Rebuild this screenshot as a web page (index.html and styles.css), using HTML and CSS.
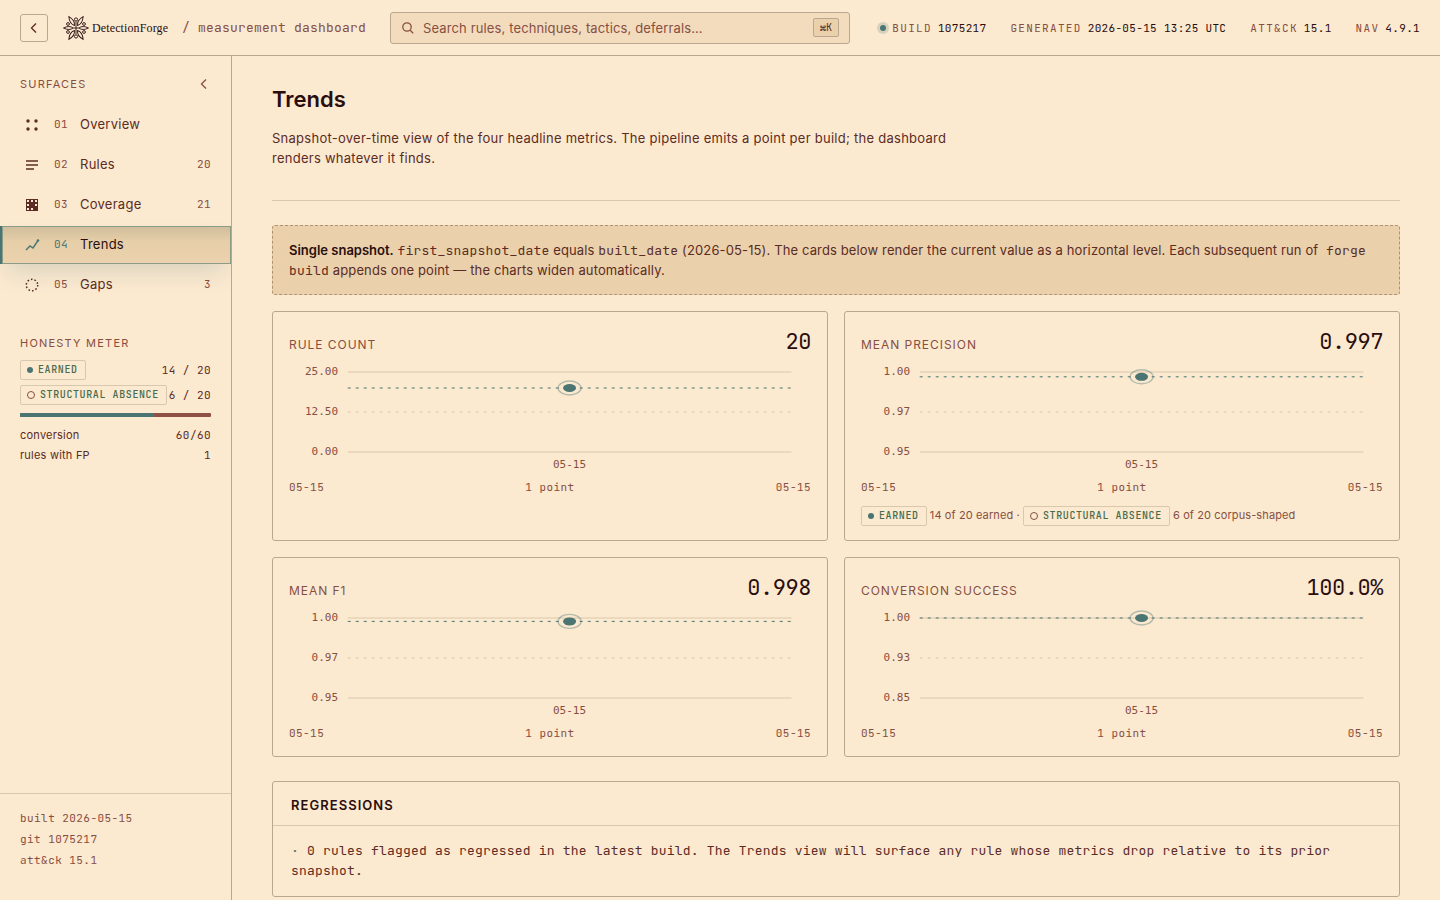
FILE: index.html
```
<!DOCTYPE html>
<html lang="en">

<head>
    <meta charset="UTF-8">
    <meta name="viewport" content="width=device-width, initial-scale=1.0">
    <title>Trends - DetectionForge</title>
    <link rel="stylesheet" href="styles.css">
</head>

<body>
    <header class="topbar">
        <button class="back" type="button" aria-label="Back">
            <svg width="14" height="14" viewBox="0 0 14 14"><path d="M9 2.5 4.5 7 9 11.5"/></svg>
        </button>
        <a class="brand" href="#">
            <svg class="brand-mark" width="26" height="26" viewBox="-13 -13 26 26">
                <defs>
                    <path id="petal" d="M0-3Q-3-6.5 0-12.5Q3-6.5 0-3Z"/>
                    <path id="leaf" d="M0-3Q-3.4-7 0-13.5Q3.4-7 0-3Z"/>
                </defs>
                <use href="#petal" transform="rotate(90)"/>
                <use href="#petal" transform="rotate(270)"/>
                <use href="#leaf" transform="rotate(32)"/>
                <use href="#leaf" transform="rotate(-32)"/>
                <use href="#leaf" transform="rotate(148)"/>
                <use href="#leaf" transform="rotate(212)"/>
                <path d="M0-6.5V6.5M-3 0H3"/>
                <circle cx="0" cy="-8.5" r="1.6"/>
                <circle cx="0" cy="8.5" r="1.6"/>
                <circle cx="8" cy="-4" r="1.4"/>
                <circle cx="8" cy="4" r="1.4"/>
                <circle cx="-8" cy="-4" r="1.4"/>
                <circle cx="-8" cy="4" r="1.4"/>
            </svg>
            <span class="brand-name">DetectionForge</span>
        </a>
        <span class="crumb">/ measurement dashboard</span>
        <label class="search">
            <svg width="14" height="14" viewBox="0 0 14 14"><circle cx="6" cy="6" r="4.2"/><path d="m9.2 9.2 3 3"/></svg>
            <input type="search" aria-label="Search" placeholder="Search rules, techniques, tactics, deferrals…">
            <kbd>⌘K</kbd>
        </label>
        <div class="stats">
            <span class="stat"><i class="pulse"></i><span>BUILD</span><b>1075217</b></span>
            <span class="stat"><span>GENERATED</span><b>2026-05-15 13:25 UTC</b></span>
            <span class="stat"><span>ATT&amp;CK</span><b>15.1</b></span>
            <span class="stat"><span>NAV</span><b>4.9.1</b></span>
        </div>
    </header>

    <div class="layout">
        <aside class="sidebar">
            <div class="side-head">
                <h2 class="side-title">SURFACES</h2>
                <button class="collapse" type="button" aria-label="Collapse sidebar">
                    <svg width="14" height="14" viewBox="0 0 14 14"><path d="M9 2.5 4.5 7 9 11.5"/></svg>
                </button>
            </div>
            <nav class="nav">
                <a href="#overview">
                    <svg width="16" height="16" viewBox="0 0 16 16"><g fill="currentColor"><circle cx="4" cy="4" r="1.7"/><circle cx="12" cy="4" r="1.7"/><circle cx="4" cy="12" r="1.7"/><circle cx="12" cy="12" r="1.7"/></g></svg>
                    <span class="num">01</span><span>Overview</span>
                </a>
                <a href="#rules">
                    <svg width="16" height="16" viewBox="0 0 16 16"><path d="M2 4h12M2 8h12M2 12h8" stroke="currentColor" stroke-width="1.5"/></svg>
                    <span class="num">02</span><span>Rules</span><span class="count">20</span>
                </a>
                <a href="#coverage">
                    <svg width="16" height="16" viewBox="0 0 16 16"><path fill="currentColor" d="M2 2h12v12H2z"/><path class="holes" d="M3 3h2v2H3zM7 3h2v2H7zM11 3h2v2h-2zM3 7h2v2H3zM11 7h2v2h-2zM3 11h2v2H3zM7 11h2v2H7z"/></svg>
                    <span class="num">03</span><span>Coverage</span><span class="count">21</span>
                </a>
                <a class="active" href="#trends" aria-current="page">
                    <svg width="16" height="16" viewBox="0 0 16 16"><path d="m2 13 4-4 3 2 5-7.5" fill="none" stroke="currentColor" stroke-width="1.4"/><circle cx="14" cy="3.5" r="1.3" fill="currentColor"/></svg>
                    <span class="num">04</span><span>Trends</span>
                </a>
                <a href="#gaps">
                    <svg width="16" height="16" viewBox="0 0 16 16"><circle cx="8" cy="8" r="5.7" fill="none" stroke="currentColor" stroke-width="1.5" stroke-dasharray="1.6 1.98"/></svg>
                    <span class="num">05</span><span>Gaps</span><span class="count">3</span>
                </a>
            </nav>

            <section class="honesty">
                <h2 class="side-title">HONESTY METER</h2>
                <div class="meter-row"><span class="badge"><i class="dot"></i>EARNED</span><span class="mono">14 / 20</span></div>
                <div class="meter-row"><span class="badge"><i class="ring"></i>STRUCTURAL ABSENCE</span><span class="mono">6 / 20</span></div>
                <div class="bar"><span style="width: 70%"></span></div>
                <div class="kv"><span>conversion</span><span class="mono">60/60</span></div>
                <div class="kv"><span>rules with FP</span><span class="mono">1</span></div>
            </section>

            <footer class="side-foot">
                <div>built 2026-05-15</div>
                <div>git 1075217</div>
                <div>att&amp;ck 15.1</div>
            </footer>
        </aside>

        <main class="main">
            <div class="page-head">
                <h1>Trends</h1>
                <p>Snapshot-over-time view of the four headline metrics. The pipeline emits a point per build; the dashboard renders whatever it finds.</p>
            </div>

            <div class="notice">
                <strong>Single snapshot.</strong> <code>first_snapshot_date</code> equals <code>built_date</code> (2026-05-15). The cards below render the current value as a horizontal level. Each subsequent run of <code class="cmd">forge build</code> appends one point — the charts widen automatically.
            </div>

            <div class="cards">
                <section class="card">
                    <div class="card-head"><h3>RULE COUNT</h3><span class="value">20</span></div>
                    <svg class="chart" role="img" aria-label="Rule count over time">
                        <g class="grid">
                            <line x1="11.25%" x2="96.25%" y1="8" y2="8"/>
                            <line class="mid" x1="11.25%" x2="96.25%" y1="48" y2="48"/>
                            <line x1="11.25%" x2="96.25%" y1="88" y2="88"/>
                        </g>
                        <g class="y-axis">
                            <text x="9.4%" y="11">25.00</text>
                            <text x="9.4%" y="51">12.50</text>
                            <text x="9.4%" y="91">0.00</text>
                        </g>
                        <text class="x-axis" x="53.75%" y="104">05-15</text>
                        <line class="level" x1="11.25%" x2="96.25%" y1="24" y2="24"/>
                        <ellipse class="halo" cx="53.75%" cy="24" rx="11.5" ry="7"/>
                        <ellipse class="point" cx="53.75%" cy="24" rx="6.5" ry="4"/>
                    </svg>
                    <div class="card-foot"><span>05-15</span><span>1 point</span><span>05-15</span></div>
                </section>

                <section class="card">
                    <div class="card-head"><h3>MEAN PRECISION</h3><span class="value">0.997</span></div>
                    <svg class="chart" role="img" aria-label="Mean precision over time">
                        <g class="grid">
                            <line x1="11.25%" x2="96.25%" y1="8" y2="8"/>
                            <line class="mid" x1="11.25%" x2="96.25%" y1="48" y2="48"/>
                            <line x1="11.25%" x2="96.25%" y1="88" y2="88"/>
                        </g>
                        <g class="y-axis">
                            <text x="9.4%" y="11">1.00</text>
                            <text x="9.4%" y="51">0.97</text>
                            <text x="9.4%" y="91">0.95</text>
                        </g>
                        <text class="x-axis" x="53.75%" y="104">05-15</text>
                        <line class="level" x1="11.25%" x2="96.25%" y1="12.8" y2="12.8"/>
                        <ellipse class="halo" cx="53.75%" cy="12.8" rx="11.5" ry="7"/>
                        <ellipse class="point" cx="53.75%" cy="12.8" rx="6.5" ry="4"/>
                    </svg>
                    <div class="card-foot"><span>05-15</span><span>1 point</span><span>05-15</span></div>
                    <div class="legend">
                        <span class="badge"><i class="dot"></i>EARNED</span> 14 of 20 earned · <span class="badge"><i class="ring"></i>STRUCTURAL ABSENCE</span> 6 of 20 corpus-shaped
                    </div>
                </section>

                <section class="card">
                    <div class="card-head"><h3>MEAN F1</h3><span class="value">0.998</span></div>
                    <svg class="chart" role="img" aria-label="Mean F1 over time">
                        <g class="grid">
                            <line x1="11.25%" x2="96.25%" y1="8" y2="8"/>
                            <line class="mid" x1="11.25%" x2="96.25%" y1="48" y2="48"/>
                            <line x1="11.25%" x2="96.25%" y1="88" y2="88"/>
                        </g>
                        <g class="y-axis">
                            <text x="9.4%" y="11">1.00</text>
                            <text x="9.4%" y="51">0.97</text>
                            <text x="9.4%" y="91">0.95</text>
                        </g>
                        <text class="x-axis" x="53.75%" y="104">05-15</text>
                        <line class="level" x1="11.25%" x2="96.25%" y1="11.4" y2="11.4"/>
                        <ellipse class="halo" cx="53.75%" cy="11.4" rx="11.5" ry="7"/>
                        <ellipse class="point" cx="53.75%" cy="11.4" rx="6.5" ry="4"/>
                    </svg>
                    <div class="card-foot"><span>05-15</span><span>1 point</span><span>05-15</span></div>
                </section>

                <section class="card">
                    <div class="card-head"><h3>CONVERSION SUCCESS</h3><span class="value">100.0%</span></div>
                    <svg class="chart" role="img" aria-label="Conversion success over time">
                        <g class="grid">
                            <line x1="11.25%" x2="96.25%" y1="8" y2="8"/>
                            <line class="mid" x1="11.25%" x2="96.25%" y1="48" y2="48"/>
                            <line x1="11.25%" x2="96.25%" y1="88" y2="88"/>
                        </g>
                        <g class="y-axis">
                            <text x="9.4%" y="11">1.00</text>
                            <text x="9.4%" y="51">0.93</text>
                            <text x="9.4%" y="91">0.85</text>
                        </g>
                        <text class="x-axis" x="53.75%" y="104">05-15</text>
                        <line class="level" x1="11.25%" x2="96.25%" y1="8" y2="8"/>
                        <ellipse class="halo" cx="53.75%" cy="8" rx="11.5" ry="7"/>
                        <ellipse class="point" cx="53.75%" cy="8" rx="6.5" ry="4"/>
                    </svg>
                    <div class="card-foot"><span>05-15</span><span>1 point</span><span>05-15</span></div>
                </section>
            </div>

            <section class="panel">
                <h2>REGRESSIONS</h2>
                <p><span class="bullet">·</span> 0 rules flagged as regressed in the latest build. The Trends view will surface any rule whose metrics drop relative to its prior snapshot.</p>
            </section>
        </main>
    </div>
</body>

</html>
```

FILE: styles.css
```
:root {
    --bg: #fbe9d0;
    --field: #f3dcbe;
    --sand: #ead0ab;
    --ink: #2a0e0e;
    --text: #5b2c24;
    --muted: #874f41;
    --teal: #4b7573;
    --green: #476b4c;
    --line: #b9a78f;
    --line-soft: #d9c8ae;
    --sans: Inter, sans-serif;
    --mono: "JetBrains Mono", "Liberation Mono", monospace;
}

* {
    box-sizing: border-box;
}

body {
    margin: 0;
    height: 100vh;
    display: flex;
    flex-direction: column;
    background: var(--bg);
    color: var(--text);
    font-family: var(--sans);
    font-size: 13px;
    line-height: 20px;
}

h1, h2, h3, p {
    margin: 0;
}

a {
    color: inherit;
    text-decoration: none;
}

button {
    padding: 0;
    background: none;
    border: none;
    color: inherit;
    cursor: pointer;
}

/* top bar */
.topbar {
    display: flex;
    align-items: center;
    flex: none;
    height: 56px;
    padding: 0 20px;
    border-bottom: 1px solid var(--line);
    white-space: nowrap;
}

.back,
.collapse {
    display: flex;
    align-items: center;
    justify-content: center;
}

.back {
    width: 28px;
    height: 28px;
    border: 1px solid var(--line);
    border-radius: 3px;
}

.back svg,
.collapse svg,
.search svg {
    fill: none;
    stroke: currentColor;
    stroke-width: 1.3;
}

.brand {
    display: flex;
    align-items: center;
    margin-left: 15px;
    gap: 3px;
    color: var(--ink);
}

.brand-mark {
    fill: none;
    stroke: currentColor;
    stroke-width: 0.9;
}

.brand-name {
    font-family: "Liberation Serif", serif;
    font-size: 12px;
    letter-spacing: 0.01em;
}

.crumb {
    margin-left: 14px;
    font-family: var(--mono);
    letter-spacing: 0.015em;
    color: var(--muted);
}

.search {
    display: flex;
    align-items: center;
    flex: 0 1 460px;
    height: 32px;
    margin-left: 24px;
    padding: 0 10px;
    gap: 8px;
    background: var(--field);
    border: 1px solid var(--line);
    border-radius: 3px;
    color: var(--muted);
}

.search input {
    flex: 1;
    min-width: 0;
    padding: 0;
    background: none;
    border: none;
    outline: none;
    font: inherit;
    letter-spacing: 0.01em;
    color: var(--ink);
}

.search input::placeholder {
    color: var(--muted);
    opacity: 1;
}

kbd {
    padding: 0 6px;
    background: var(--sand);
    border: 1px solid var(--line);
    border-radius: 2px;
    font-family: var(--mono);
    font-size: 10px;
    line-height: 17px;
    color: var(--text);
}

.stats {
    display: flex;
    gap: 24px;
    margin-left: auto;
    font-family: var(--mono);
    font-size: 11px;
}

.stat {
    display: flex;
    align-items: center;
    gap: 6px;
    letter-spacing: 0.12em;
    color: var(--muted);
}

.stat b {
    font-weight: 400;
    letter-spacing: 0.03em;
    color: var(--ink);
}

.pulse {
    width: 6px;
    height: 6px;
    border-radius: 50%;
    background: var(--teal);
    box-shadow: 0 0 0 3px rgba(75, 117, 115, 0.2);
}

/* sidebar */
.layout {
    display: flex;
    flex: 1;
    min-height: 0;
}

.sidebar {
    display: flex;
    flex-direction: column;
    flex: none;
    width: 232px;
    border-right: 1px solid var(--line);
    overflow: hidden;
}

.side-head {
    display: flex;
    align-items: center;
    justify-content: space-between;
    padding: 18px 20px 12px;
    color: var(--muted);
}

.side-title {
    font-size: 11px;
    font-weight: 400;
    letter-spacing: 0.11em;
    color: var(--muted);
}

.nav {
    display: flex;
    flex-direction: column;
    gap: 2px;
}

.nav a {
    display: flex;
    align-items: center;
    gap: 10px;
    height: 38px;
    padding: 0 20px 0 18px;
    border-left: 2px solid transparent;
    letter-spacing: 0.02em;
}

.nav span {
    padding-bottom: 2px;
}

.nav svg {
    flex: none;
    width: 24px;
}

.nav .holes {
    fill: var(--bg);
}

.num,
.count {
    font-family: var(--mono);
    font-size: 11px;
    letter-spacing: 0.04em;
    color: var(--muted);
}

.num {
    width: 16px;
}

.count {
    margin-left: auto;
}

.nav .active {
    background: linear-gradient(#d0bd9c, #e5cea8 40%, #ecd2ae);
    border-left-color: var(--teal);
    box-shadow: inset 0 0 0 1px #8a9b88, 0 12px 24px -8px rgba(75, 117, 115, 0.25);
    color: var(--ink);
}

.active svg,
.active .num {
    color: var(--teal);
}

.honesty {
    padding: 29px 20px 0;
}

.mono {
    font-family: var(--mono);
    font-size: 11px;
    letter-spacing: 0.04em;
}

.meter-row,
.kv {
    display: flex;
    justify-content: space-between;
    white-space: nowrap;
}

.meter-row {
    margin-top: 5px;
}

.honesty .side-title {
    margin-bottom: 7px;
}

.badge {
    display: inline-flex;
    align-items: center;
    gap: 5px;
    height: 20px;
    padding: 0 7px 0 6px;
    border: 1px solid var(--line-soft);
    border-radius: 2px;
    font-family: var(--mono);
    font-size: 10px;
    font-weight: 500;
    letter-spacing: 0.06em;
    color: var(--green);
    vertical-align: middle;
}

.dot {
    width: 6px;
    height: 6px;
    border-radius: 50%;
    background: var(--teal);
}

.ring {
    width: 8px;
    height: 8px;
    border: 1px solid var(--muted);
    border-radius: 50%;
}

.bar {
    height: 4px;
    margin: 8px 0;
    background: #8f5145;
    border-radius: 1px;
    overflow: hidden;
}

.bar span {
    display: block;
    height: 100%;
    background: var(--teal);
}

.kv {
    font-size: 11px;
    letter-spacing: 0.02em;
}

.side-foot {
    margin-top: auto;
    padding: 14px 20px 29px;
    border-top: 1px solid var(--line-soft);
    font-family: var(--mono);
    font-size: 11px;
    line-height: 21px;
    letter-spacing: 0.04em;
    color: var(--muted);
}

/* content */
.main {
    flex: 1;
    min-width: 0;
    padding: 28px 40px 40px;
    overflow-y: auto;
    scrollbar-width: none;
}

.page-head {
    padding-bottom: 32px;
    border-bottom: 1px solid var(--line-soft);
}

.page-head h1 {
    margin-bottom: 14px;
    font-size: 22px;
    font-weight: 600;
    line-height: 30px;
    color: var(--ink);
}

.page-head p {
    max-width: 680px;
    letter-spacing: 0.02em;
}

.notice {
    margin: 24px 0 16px;
    padding: 14px 16px;
    background: var(--sand);
    border: 1px dashed #b09270;
    border-radius: 3px;
    letter-spacing: 0.01em;
}

.notice strong {
    font-weight: 600;
    letter-spacing: 0;
    color: var(--ink);
}

.notice code {
    font-family: var(--mono);
    font-size: 13px;
    line-height: 1;
    letter-spacing: 0.015em;
}

.notice .cmd {
    padding-left: 4px;
}

.cards {
    display: grid;
    grid-template-columns: 1fr 1fr;
    gap: 16px;
}

.card {
    padding: 16px;
    border: 1px solid var(--line);
    border-radius: 3px;
}

.card-head {
    display: flex;
    align-items: baseline;
    justify-content: space-between;
    height: 28px;
}

.card-head h3 {
    font-size: 12px;
    font-weight: 400;
    letter-spacing: 0.08em;
    color: var(--muted);
}

.value {
    font-family: var(--mono);
    font-size: 22px;
    line-height: 28px;
    letter-spacing: -0.02em;
    color: var(--ink);
}

.chart {
    display: block;
    width: 100%;
    height: 112px;
    margin: 8px 0 4px;
}

.grid line {
    stroke: var(--line-soft);
}

.grid .mid {
    stroke-dasharray: 3 5;
}

.chart text {
    font-family: "DejaVu Sans Mono", monospace;
    font-size: 11px;
    fill: var(--muted);
}

.y-axis text {
    text-anchor: end;
}

.chart .x-axis {
    text-anchor: middle;
}

.level {
    stroke: var(--teal);
    stroke-dasharray: 3 5;
}

.halo {
    fill: none;
    stroke: var(--teal);
    stroke-width: 1.4;
    opacity: 0.4;
}

.point {
    fill: var(--teal);
}

.card-foot {
    display: flex;
    justify-content: space-between;
    font-family: var(--mono);
    font-size: 11px;
    line-height: 14px;
    letter-spacing: 0.04em;
    color: var(--muted);
}

.legend {
    margin: 11px 0 -2px;
    font-size: 11px;
    letter-spacing: 0.01em;
    color: var(--muted);
}

.panel {
    margin-top: 24px;
    border: 1px solid var(--line);
    border-radius: 3px;
}

.panel h2 {
    padding: 13px 18px 10px;
    border-bottom: 1px solid var(--line-soft);
    font-size: 13px;
    font-weight: 600;
    letter-spacing: 0.08em;
    color: var(--ink);
}

.panel p {
    padding: 15px 18px;
    font-family: var(--mono);
    letter-spacing: 0.015em;
}

.bullet {
    color: var(--teal);
}
```
